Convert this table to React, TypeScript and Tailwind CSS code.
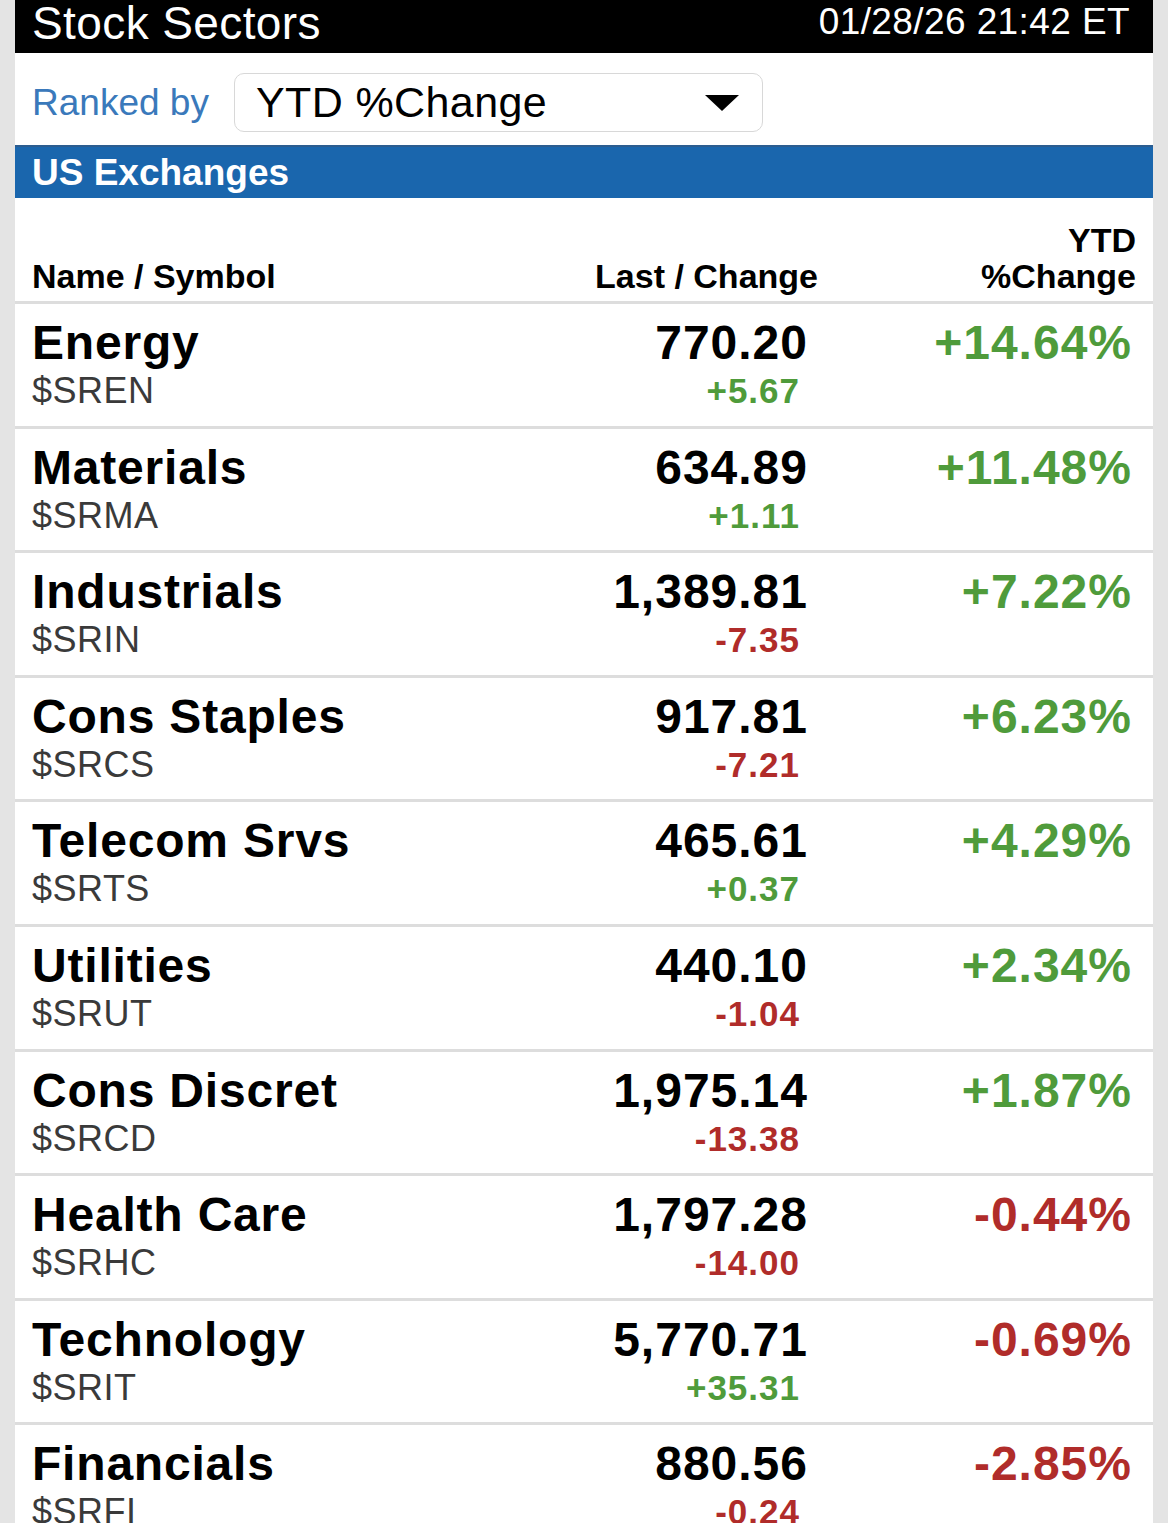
const rows = [
  { name: "Energy", sym: "$SREN", last: "770.20", chg: "+5.67", ytd: "+14.64%" },
  { name: "Materials", sym: "$SRMA", last: "634.89", chg: "+1.11", ytd: "+11.48%" },
  { name: "Industrials", sym: "$SRIN", last: "1,389.81", chg: "-7.35", ytd: "+7.22%" },
  { name: "Cons Staples", sym: "$SRCS", last: "917.81", chg: "-7.21", ytd: "+6.23%" },
  { name: "Telecom Srvs", sym: "$SRTS", last: "465.61", chg: "+0.37", ytd: "+4.29%" },
  { name: "Utilities", sym: "$SRUT", last: "440.10", chg: "-1.04", ytd: "+2.34%" },
  { name: "Cons Discret", sym: "$SRCD", last: "1,975.14", chg: "-13.38", ytd: "+1.87%" },
  { name: "Health Care", sym: "$SRHC", last: "1,797.28", chg: "-14.00", ytd: "-0.44%" },
  { name: "Technology", sym: "$SRIT", last: "5,770.71", chg: "+35.31", ytd: "-0.69%" },
  { name: "Financials", sym: "$SRFI", last: "880.56", chg: "-0.24", ytd: "-2.85%" },
];

const tone = (v: string) => (v.startsWith("-") ? "text-[#b02c2a]" : "text-[#4f9b3b]");

export default function App() {
  return (
    <div className="h-[1523px] overflow-hidden bg-[#e4e4e4] px-[15px] font-['Liberation_Sans',Arial,sans-serif]">
      <div className="bg-white">
        {/* title bar */}
        <div className="flex h-[53px] items-start justify-between bg-black pl-[17px] pr-[23px] text-white">
          <span className="text-[46px] leading-[46px] tracking-[0.4px]">Stock Sectors</span>
          <span className="pt-[3px] text-[37px] leading-[37px] tracking-[0.4px]">01/28/26 21:42 ET</span>
        </div>

        {/* ranked by */}
        <div className="flex h-[92px] items-start pl-[17px] pt-[20px]">
          <span className="mt-[11px] text-[37px] leading-[37px] text-[#3a79bb]">Ranked by</span>
          <div className="ml-[25px] flex h-[59px] w-[529px] items-center justify-between rounded-[10px] border border-[#d8d8d8] pl-[21px] pr-[23px]">
            <span className="text-[43px] leading-[43px] tracking-[0.4px] text-black">YTD %Change</span>
            <svg width="34" height="16" viewBox="0 0 34 16">
              <polygon points="0,0 34,0 17,16" fill="#000" />
            </svg>
          </div>
        </div>

        {/* section bar */}
        <div className="flex h-[53px] items-center border-t-2 border-[#2c5d90] bg-[#1a66ad] pl-[17px]">
          <span className="text-[37px] font-bold leading-[37px] text-white">US Exchanges</span>
        </div>

        {/* column heads */}
        <div className="flex h-[106px] items-end border-b-[3px] border-[#dddddd] px-[17px] pb-[7px] text-[34px] font-bold leading-[36px] text-black">
          <div className="flex-1">Name / Symbol</div>
          <div className="w-[300px] text-right">Last / Change</div>
          <div className="w-[318px] text-right">
            YTD
            <br />
            %Change
          </div>
        </div>

        {rows.map((r) => (
          <div
            key={r.sym}
            className="flex h-[124.6px] items-start border-b-[3px] border-[#dddddd] px-[17px] pt-[15px]"
          >
            <div className="flex-1">
              <div className="text-[48px] font-bold leading-[48px] tracking-[0.8px] text-black">{r.name}</div>
              <div className="mt-[6px] text-[36px] leading-[36px] tracking-[0.5px] text-[#3a3a3a]">{r.sym}</div>
            </div>
            <div className="w-[300px] text-right">
              <div className="pr-[10px] text-[48px] font-bold leading-[48px] tracking-[1px] text-black">{r.last}</div>
              <div className={`mt-[6px] pr-[18px] text-[35px] font-bold leading-[36px] tracking-[1px] ${tone(r.chg)}`}>
                {r.chg}
              </div>
            </div>
            <div className={`w-[318px] pr-[4px] text-right text-[48px] font-bold leading-[48px] tracking-[1px] ${tone(r.ytd)}`}>
              {r.ytd}
            </div>
          </div>
        ))}
      </div>
    </div>
  );
}
